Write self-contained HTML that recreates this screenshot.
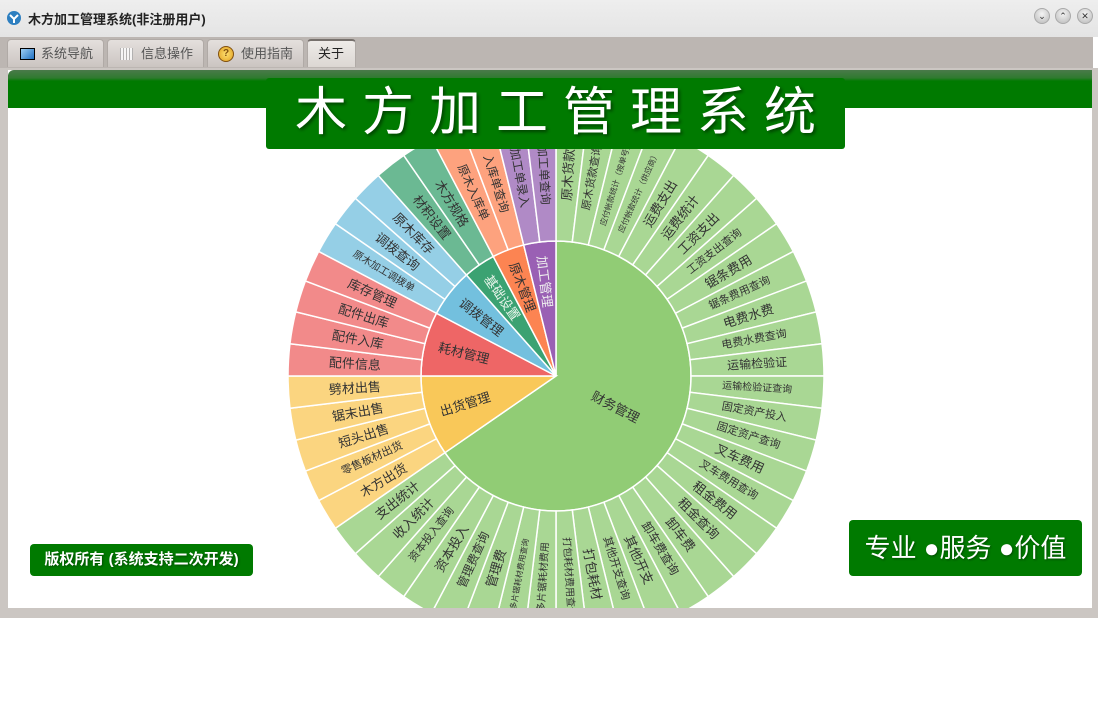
<!DOCTYPE html>
<html><head><meta charset="utf-8">
<style>
*{margin:0;padding:0;box-sizing:border-box}
body{width:1098px;height:723px;background:#fff;position:relative;overflow:hidden;font-family:"Liberation Sans","Noto Sans CJK SC",sans-serif}
#titlebar{position:absolute;left:0;top:0;width:1098px;height:37px;background:linear-gradient(#eeeeee,#e4e4e4)}
#titlebar .t{position:absolute;left:28px;top:9px;font-size:13px;font-weight:bold;color:#222}
.wb{position:absolute;top:8px;width:16px;height:16px;border-radius:50%;background:radial-gradient(circle at 50% 35%,#f4f4f4,#b8b8b8);border:1px solid #aaa;font-size:9px;line-height:14px;text-align:center;color:#333}
#tabs{position:absolute;left:0;top:37px;width:1093px;height:31px;background:#bcb6b2}
.tab{position:absolute;top:2px;height:28px;border-radius:4px 4px 0 0;background:linear-gradient(#e4e0dd,#cbc5c1);border:1px solid #b0aaa6;border-bottom:none;font-size:13px;color:#555;line-height:27px}
.tab.a{background:linear-gradient(#eeebe8,#dcd7d3);border-top:2px solid #76706c;color:#222;line-height:25px}
#frame{position:absolute;left:0;top:68px;width:1098px;height:550px;background:#cbc6c2}
#content{position:absolute;left:8px;top:70px;width:1084px;height:538px;background:#fff;overflow:hidden}
#hdr{position:absolute;left:0;top:0;width:1084px;height:38px;background:linear-gradient(#4a7a4a 0px,#2f7a2f 8px,#007a00 11px,#007a00);border-radius:6px 0 0 0}
#ttl{position:absolute;left:258px;top:8px;width:579px;height:71px;background:#007a00;border-radius:3px;color:#fff;font-size:52px;letter-spacing:15px;text-align:center;line-height:70px;text-shadow:2px 2px 3px rgba(0,0,0,.45);padding-left:15px}
.badge{position:absolute;background:#007a00;color:#fff;border-radius:4px;text-align:center;text-shadow:1px 1px 2px rgba(0,0,0,.4)}
</style></head><body>
<div id="titlebar">
<svg style="position:absolute;left:6px;top:10px" width="16" height="16" viewBox="0 0 16 16"><circle cx="8" cy="8" r="7" fill="#2d7fc0"/><path d="M4 5 L8 9 L12 5 M8 9 V13" stroke="#fff" stroke-width="2" fill="none"/></svg>
<div class="t">木方加工管理系统(非注册用户)</div>
<div class="wb" style="left:1034px">&#8964;</div>
<div class="wb" style="left:1055px">&#8963;</div>
<div class="wb" style="left:1077px">✕</div>
</div>
<div id="tabs">
<div class="tab" style="left:7px;width:97px"><span style="position:absolute;left:12px;top:8px;width:15px;height:12px;border:1px solid #000;background:linear-gradient(135deg,#9ed0f5,#1f6fc0)"></span><span style="position:absolute;left:33px">系统导航</span></div>
<div class="tab" style="left:107px;width:97px"><span style="position:absolute;left:12px;top:8px;width:13px;height:12px;background:repeating-linear-gradient(90deg,#aaa 0 1px,#fff 1px 3px),#fff;opacity:.8"></span><span style="position:absolute;left:33px">信息操作</span></div>
<div class="tab" style="left:207px;width:97px"><span style="position:absolute;left:10px;top:6px;width:16px;height:16px;border-radius:50%;background:radial-gradient(#ffe070,#e0a020);border:1px solid #805010;font-size:10px;line-height:14px;text-align:center;color:#805010;font-weight:bold">?</span><span style="position:absolute;left:33px">使用指南</span></div>
<div class="tab a" style="left:307px;width:49px"><span style="position:absolute;left:10px">关于</span></div>
</div>
<div id="frame"></div>
<div id="content">
<svg id="sb" style="position:absolute;left:0;top:0" width="1084" height="538"></svg>
<div id="hdr"></div>
<div id="ttl">木方加工管理系统</div>
<div class="badge" style="left:22px;top:474px;width:223px;height:32px;font-size:15px;font-weight:bold;line-height:32px">版权所有 (系统支持二次开发)</div>
<div class="badge" style="left:841px;top:450px;width:233px;height:56px;font-size:26px;line-height:56px">专业 ●服务 ●价值</div>
</div>
<script>
var cats=[
["财务管理","#91cc75","#a9d794","#333",["原木货款","原木货款查询","应付帐款统计（按单号）","应付帐款统计（供应商）","运费支出","运费统计","工资支出","工资支出查询","锯条费用","锯条费用查询","电费水费","电费水费查询","运输检验证","运输检验证查询","固定资产投入","固定资产查询","叉车费用","叉车费用查询","租金费用","租金查询","卸车费","卸车费查询","其他开支","其他开支查询","打包耗材","打包耗材费用查询","多片锯耗材费用","多片锯耗材费用查询","管理费","管理费查询","资本投入","资本投入查询","收入统计","支出统计"]],
["出货管理","#f9c859","#fbd580","#333",["木方出货","零售板材出货","短头出售","锯末出售","劈材出售"]],
["耗材管理","#ee6666","#f28a8a","#333",["配件信息","配件入库","配件出库","库存管理"]],
["调拨管理","#73c0de","#95cfe6","#333",["原木加工调拨单","调拨查询","原木库存"]],
["基础设置","#3ba272","#6bb993","#e8f4ea",["材积设置","木方规格"]],
["原木管理","#fc8452","#fda27e","#333",["原木入库单","入库单查询"]],
["加工管理","#9a60b4","#b08ac6","#eee",["加工单录入","加工单查询"]]];
var cx=548,cy=306,r1=135,r2=268,step=360/52,NS="http://www.w3.org/2000/svg",svg=document.getElementById("sb");
function pt(a,r){var t=(a-90)*Math.PI/180;return [cx+r*Math.cos(t),cy+r*Math.sin(t)];}
function arc(a0,a1,ri,ro){var p1=pt(a0,ro),p2=pt(a1,ro),l=(a1-a0)>180?1:0,d="M"+p1+" A"+ro+","+ro+" 0 "+l+" 1 "+p2;
if(ri>0){var p3=pt(a1,ri),p4=pt(a0,ri);d+=" L"+p3+" A"+ri+","+ri+" 0 "+l+" 0 "+p4+" Z";}else d+=" L"+cx+","+cy+" Z";return d;}
function path(d,f){var e=document.createElementNS(NS,"path");e.setAttribute("d",d);e.setAttribute("fill",f);e.setAttribute("stroke","#fff");e.setAttribute("stroke-width","1.5");svg.appendChild(e);}
function txt(s,a,r,fs,col){var p=pt(a,r),rot=a<180?a-90:a-270;var e=document.createElementNS(NS,"text");e.setAttribute("x",p[0]);e.setAttribute("y",p[1]);e.setAttribute("text-anchor","middle");e.setAttribute("dominant-baseline","central");e.setAttribute("font-size",fs);e.setAttribute("fill",col);e.setAttribute("font-family",'"Liberation Sans","Noto Sans CJK SC",sans-serif');e.setAttribute("transform","rotate("+rot+" "+p[0]+" "+p[1]+")");e.textContent=s;svg.appendChild(e);}
var a=0,labels=[];
cats.forEach(function(c){var n=c[4].length,a0=a,a1=a+n*step;path(arc(a0,a1,0,r1),c[1]);
c[4].forEach(function(l,i){var b0=a+i*step;path(arc(b0,b0+step,r1,r2),c[2]);var fs=l.length<=4?13:l.length<=5?12:l.length<=6?11:l.length<=8?10:8;labels.push([l,b0+step/2,(r1+r2)/2,fs,"#333"]);});
labels.push([c[0],(a0+a1)/2,c[0]=="财务管理"?67:95,13,c[3]]);a=a1;});
labels.forEach(function(l){txt.apply(null,l);});
</script>
</body></html>
